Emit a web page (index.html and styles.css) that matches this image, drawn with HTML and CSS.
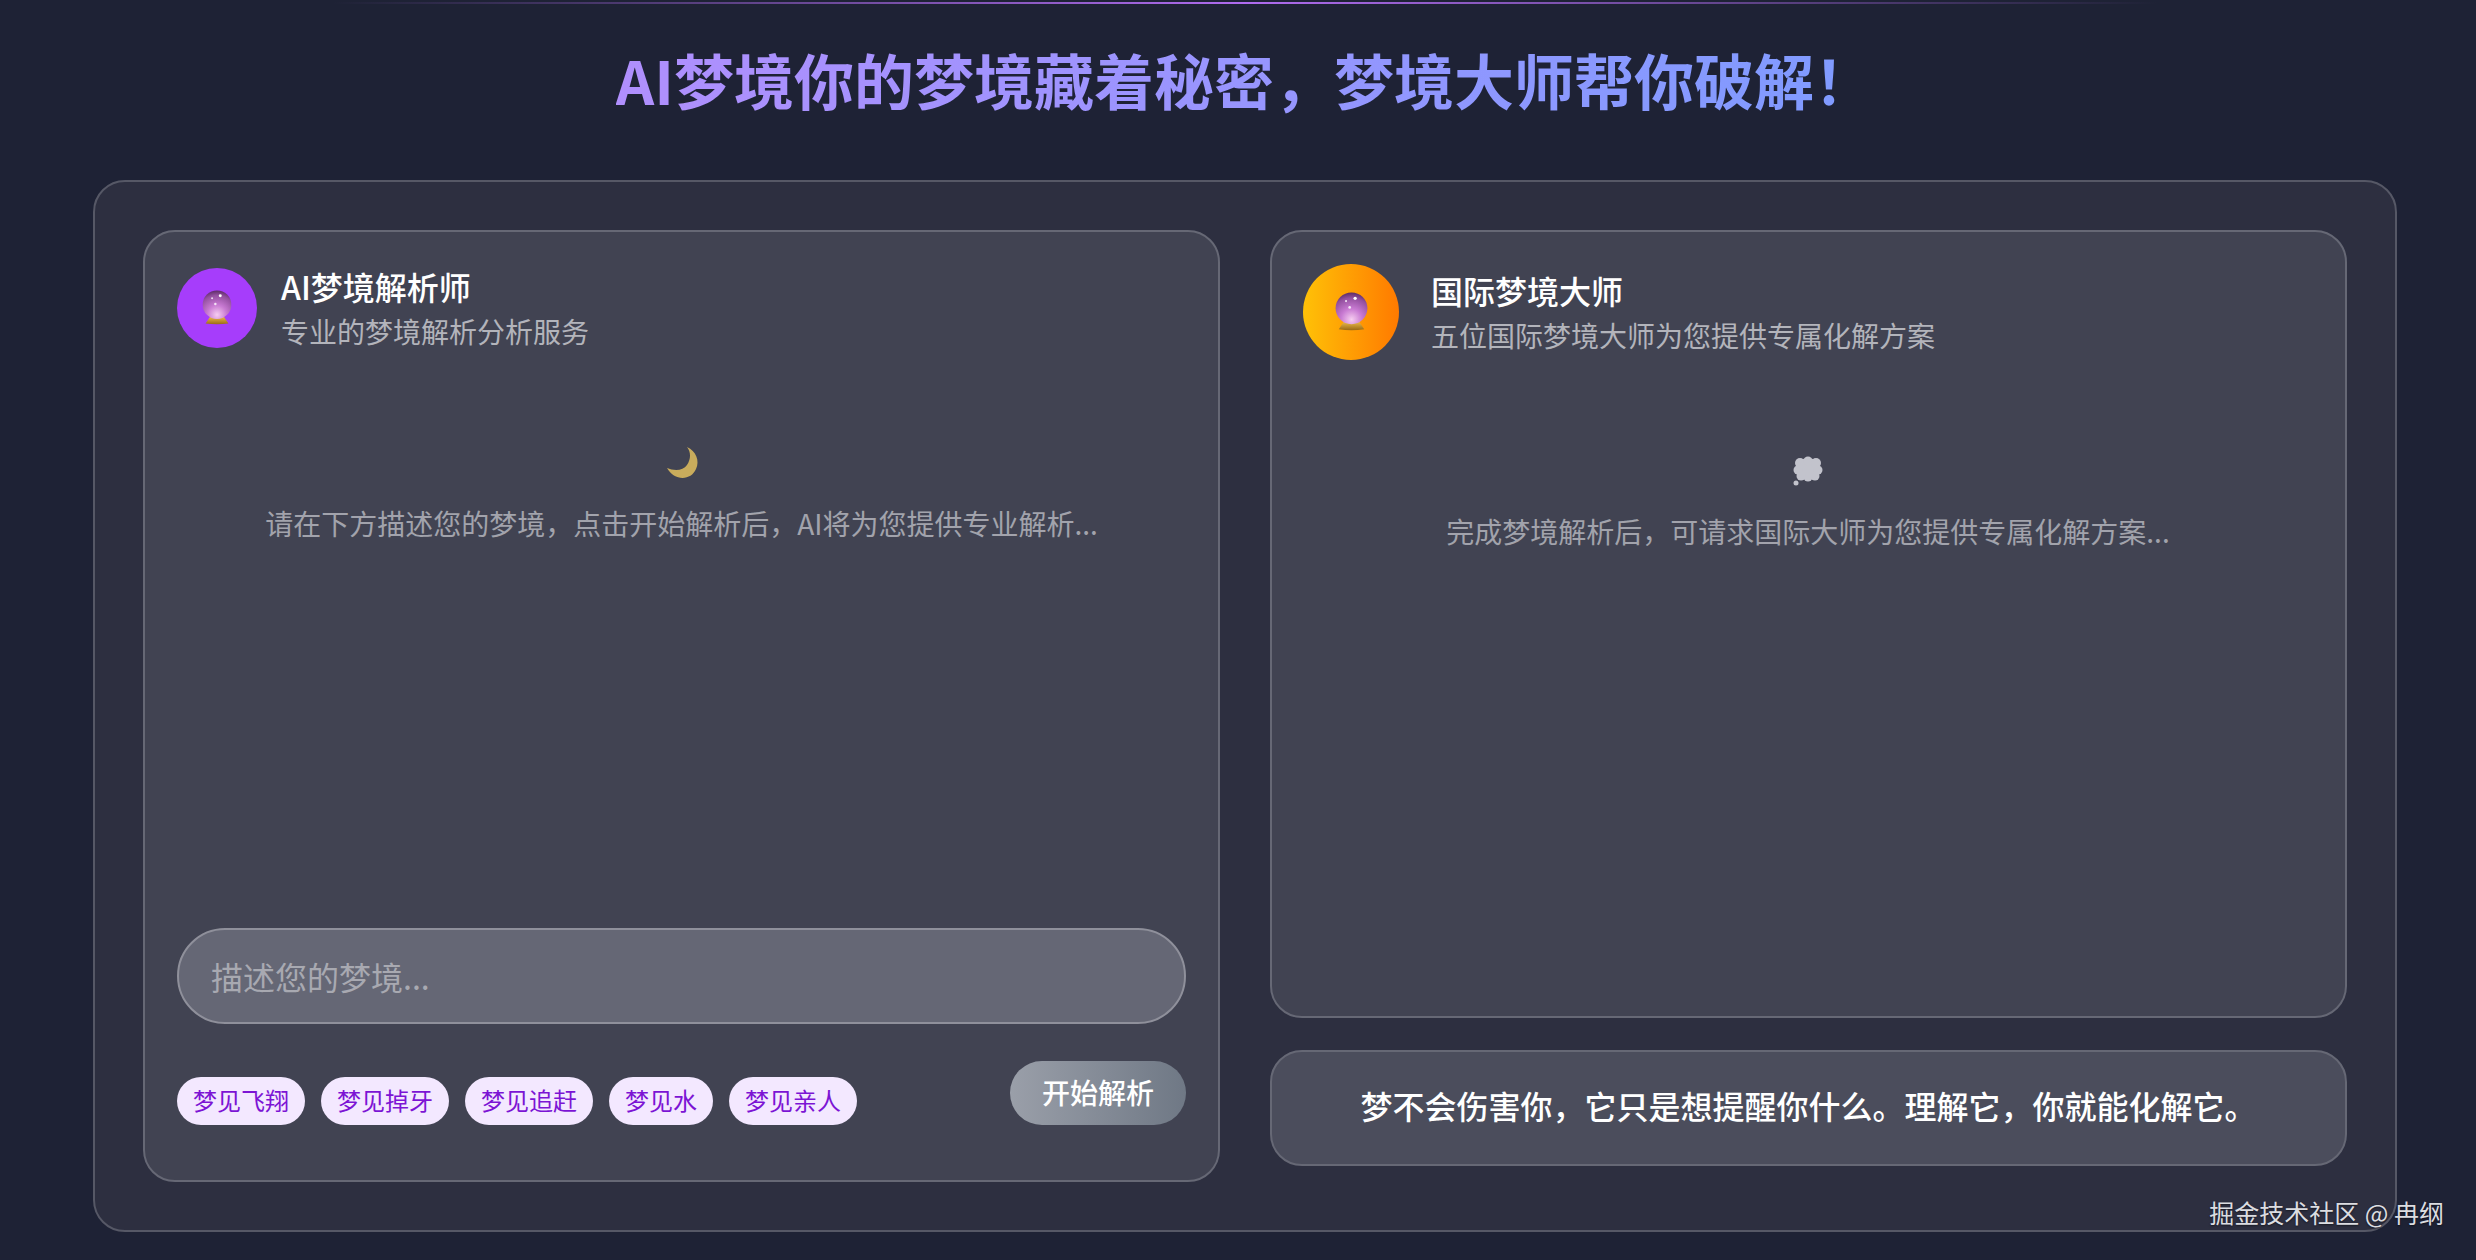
FILE: index.html
```html
<!DOCTYPE html>
<html lang="zh">
<head>
    <meta charset="utf-8">
    <title>AI梦境</title>
    <link rel="stylesheet" href="styles.css">
</head>
<body>
    <svg class="defs" width="0" height="0">
        <defs>
            <radialGradient id="ball" cx="50%" cy="85%" r="85%">
                <stop offset="0" stop-color="#f6cdf0"/>
                <stop offset="0.4" stop-color="#c87ad2"/>
                <stop offset="0.8" stop-color="#93509f"/>
                <stop offset="1" stop-color="#5c2c66"/>
            </radialGradient>
            <linearGradient id="stand" x1="0" y1="0" x2="0" y2="1">
                <stop offset="0" stop-color="#f2c14e"/>
                <stop offset="1" stop-color="#9a6a14"/>
            </linearGradient>
            <symbol id="crystal" viewBox="0 0 36 44">
                <path d="M10 32 L26 32 L32 41 Q18 43 4 41Z" fill="url(#stand)"/>
                <circle cx="18" cy="18" r="17.5" fill="url(#ball)"/>
                <circle cx="22" cy="7" r="1.8" fill="#fff"/>
                <circle cx="12" cy="10" r="1.2" fill="#fff" opacity="0.8"/>
                <circle cx="16" cy="17" r="1.5" fill="#fff" opacity="0.8"/>
            </symbol>
        </defs>
    </svg>

    <div class="page">
        <div class="top_line"></div>
        <h1 class="title">AI梦境你的梦境藏着秘密，梦境大师帮你破解！</h1>

        <div class="panel">
            <div class="card card_left">
                <div class="head">
                    <div class="avatar avatar_small">
                        <svg class="ball_small"><use href="#crystal"/></svg>
                    </div>
                    <div class="head_text">
                        <div class="name">AI梦境解析师</div>
                        <div class="desc">专业的梦境解析分析服务</div>
                    </div>
                </div>

                <div class="empty">
                    <svg class="empty_icon" viewBox="0 0 48 48">
                        <path d="M29 8 C38 12 42 22 38 30 C33 42 16 42 9 29 C16 32 25 32 29 26 C33 20 33 13 29 8Z" fill="#c9ac5c"/>
                    </svg>
                    <p class="empty_text">请在下方描述您的梦境，点击开始解析后，AI将为您提供专业解析...</p>
                </div>

                <input class="dream_input" type="text" placeholder="描述您的梦境...">

                <div class="actions">
                    <div class="chips">
                        <span class="chip">梦见飞翔</span>
                        <span class="chip">梦见掉牙</span>
                        <span class="chip">梦见追赶</span>
                        <span class="chip">梦见水</span>
                        <span class="chip">梦见亲人</span>
                    </div>
                    <button class="start">开始解析</button>
                </div>
            </div>

            <div class="right_col">
                <div class="card card_right">
                    <div class="head head_right">
                        <div class="avatar avatar_big">
                            <svg class="ball_big"><use href="#crystal"/></svg>
                        </div>
                        <div class="head_text">
                            <div class="name">国际梦境大师</div>
                            <div class="desc">五位国际梦境大师为您提供专属化解方案</div>
                        </div>
                    </div>

                    <div class="empty">
                        <svg class="empty_icon" viewBox="0 0 48 48" fill="#c2c3cc">
                            <circle cx="24" cy="22" r="11"/>
                            <circle cx="16" cy="16" r="5"/>
                            <circle cx="24" cy="14" r="4.5"/>
                            <circle cx="32" cy="16" r="5"/>
                            <circle cx="34" cy="23" r="4.5"/>
                            <circle cx="31" cy="29" r="4.5"/>
                            <circle cx="24" cy="30" r="4.5"/>
                            <circle cx="17" cy="29" r="4.5"/>
                            <circle cx="14" cy="23" r="4.5"/>
                            <circle cx="12" cy="36" r="2.5"/>
                        </svg>
                        <p class="empty_text">完成梦境解析后，可请求国际大师为您提供专属化解方案...</p>
                    </div>
                </div>

                <div class="quote">梦不会伤害你，它只是想提醒你什么。理解它，你就能化解它。</div>
            </div>
        </div>

        <div class="watermark">掘金技术社区 @ 冉纲</div>
    </div>
</body>
</html>
```

FILE: styles.css
```css
*
{
    box-sizing: border-box;
}
html,body
{
    margin: 0;
    height: 100%;
    overflow: hidden;
}
body
{
    background: #1e2235;
    font-family: "Noto Sans CJK SC", "Noto Sans", sans-serif;
    color: white;
}
.defs
{
    position: absolute;
}
.page
{
    position: relative;
    height: 1260px;
    padding: 37px 79px 0 93px;
}
.top_line
{
    position: absolute;
    top: 2px;
    left: 332px;
    width: 1826px;
    height: 2px;
    background: linear-gradient(90deg, transparent, #b06cf0, transparent);
}
.title
{
    width: fit-content;
    margin: 0 auto 59px auto;
    font-size: 60px;
    line-height: 84px;
    font-weight: 700;
    background: linear-gradient(90deg, #b08ffd, #7f9bff);
    -webkit-background-clip: text;
    background-clip: text;
    color: transparent;
}
.panel
{
    display: grid;
    grid-template-columns: 1fr 1fr;
    gap: 50px;
    height: 1052px;
    padding: 48px;
    background: #2d2f40;
    border: 2px solid #565866;
    border-radius: 32px;
}
.card
{
    display: flex;
    flex-direction: column;
    padding: 32px;
    background: #414352;
    border: 2px solid #666875;
    border-radius: 32px;
}
.right_col
{
    display: flex;
    flex-direction: column;
    gap: 32px;
    padding-bottom: 16px;
}
.card_right
{
    flex: 1;
    padding-left: 31px;
}
.head
{
    display: flex;
    align-items: center;
    gap: 24px;
}
.head_right
{
    gap: 32px;
}
.avatar
{
    flex: none;
    display: flex;
    align-items: center;
    justify-content: center;
    border-radius: 50%;
}
.avatar_small
{
    width: 80px;
    height: 80px;
    background: #a63dfb;
}
.avatar_big
{
    width: 96px;
    height: 96px;
    background: linear-gradient(90deg, #ffc107, #ff7a00);
}
.ball_small
{
    width: 30px;
    height: 36px;
}
.ball_big
{
    width: 33px;
    height: 40px;
}
.name
{
    margin-bottom: 2px;
    font-size: 32px;
    line-height: 44px;
    font-weight: 500;
}
.desc
{
    font-size: 28px;
    line-height: 42px;
    color: #b3b4bb;
}
.empty
{
    flex: 1;
    padding-top: 87px;
    text-align: center;
}
.empty_icon
{
    display: block;
    width: 48px;
    height: 48px;
    margin: 0 auto 14px auto;
}
.empty_text
{
    margin: 0;
    font-size: 28px;
    line-height: 44px;
    color: #a2a3ac;
}
.dream_input
{
    display: block;
    width: 100%;
    height: 96px;
    padding: 0 32px;
    background: #656775;
    border: 2px solid #8f909b;
    border-radius: 48px;
    font: inherit;
    font-size: 32px;
    color: white;
    outline: none;
}
.dream_input::placeholder
{
    color: #a8a9b1;
}
.actions
{
    display: flex;
    align-items: flex-end;
    justify-content: space-between;
    margin-top: 37px;
    margin-bottom: 23px;
}
.chips
{
    display: flex;
    gap: 16px;
}
.chip
{
    height: 48px;
    padding: 0 16px;
    background: #f3e8ff;
    border-radius: 24px;
    font-size: 24px;
    line-height: 46px;
    color: #7c14d4;
}
.start
{
    height: 64px;
    padding: 0 32px 2px 32px;
    background: linear-gradient(90deg, #9a9fa9, #6f7885);
    border: none;
    border-radius: 32px;
    font: inherit;
    font-size: 28px;
    font-weight: 500;
    color: white;
}
.quote
{
    height: 116px;
    background: #4b4d5c;
    border: 2px solid #666875;
    border-radius: 32px;
    font-size: 32px;
    line-height: 106px;
    font-weight: 500;
    text-align: center;
}
.watermark
{
    position: absolute;
    right: 32px;
    bottom: 29px;
    font-size: 25px;
    line-height: 38px;
    color: #dcdde1;
    text-shadow: 0 1px 2px rgba(0,0,0,.5);
}
```
